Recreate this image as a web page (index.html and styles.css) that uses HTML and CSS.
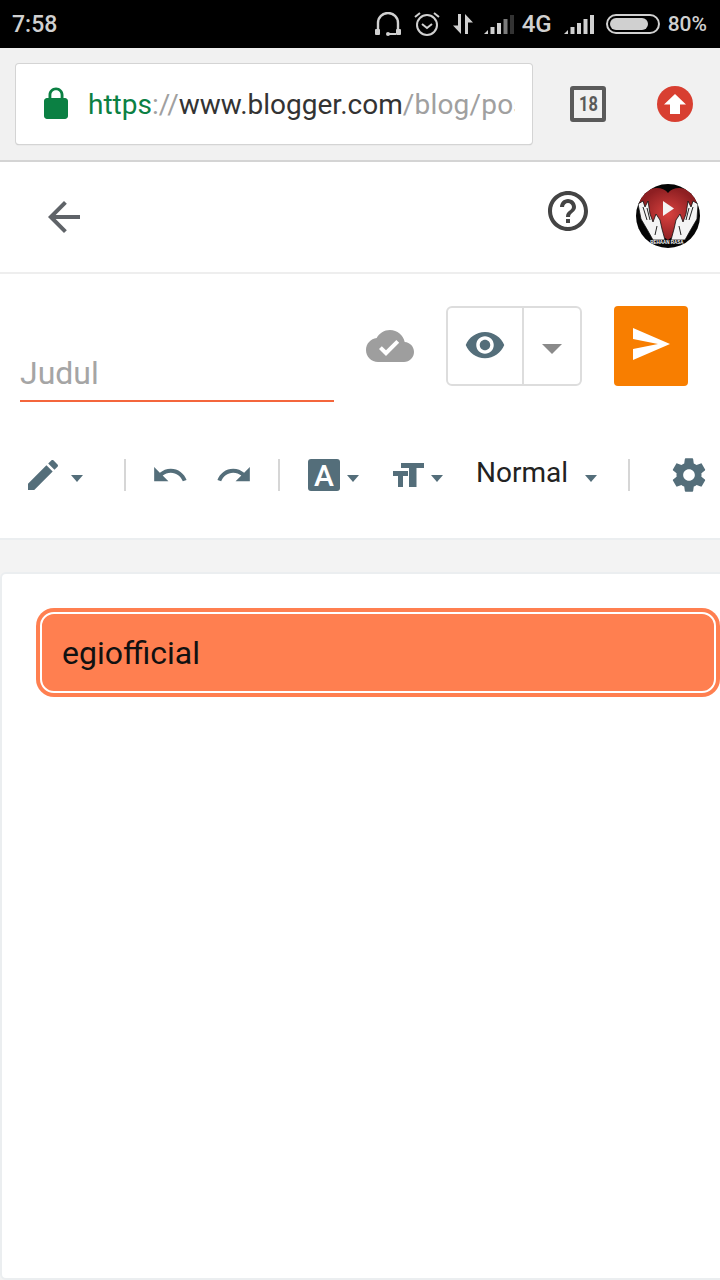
FILE: index.html
```html
<!DOCTYPE html>
<html lang="en">
<head>
  <meta charset="UTF-8">
  <meta name="viewport" content="width=device-width, initial-scale=1.0">
  <title>Blogger</title>
  <link rel="stylesheet" href="styles.css">
</head>
<body>
  <div class="statusbar">
    <span class="clock">7:58</span>
    <div class="status-icons">
      <svg class="st-headset" width="26" height="24" viewBox="0 0 26 24"><path d="M3 20V11a10 10 0 0 1 20 0v9" fill="none" stroke="#d0d0d0" stroke-width="2.400"/><rect x="0" y="17" width="5" height="6" rx="1" fill="#d0d0d0"/><rect x="21" y="17" width="5" height="6" rx="1" fill="#d0d0d0"/><path d="M12 22h9" stroke="#d0d0d0" stroke-width="2"/><circle cx="13" cy="22" r="2" fill="#d0d0d0"/></svg>
      <svg class="st-alarm" width="26" height="26" viewBox="0 0 26 26"><circle cx="13" cy="14" r="10" fill="none" stroke="#d0d0d0" stroke-width="2"/><path d="M8 13l5 4 5-4M1 6l5-4M25 6l-5-4" fill="none" stroke="#d0d0d0" stroke-width="2"/></svg>
      <svg class="st-arrows" width="22" height="22" viewBox="0 0 22 22"><path d="M9 1v20L1 12.500h5V1z" fill="#d0d0d0"/><path d="M13 21V1l8 8.500h-5V21z" fill="#d0d0d0"/></svg>
      <svg class="st-signal" width="30" height="20" viewBox="0 0 30 20"><path d="M0 20l4-4v4zM6.500 20v-7h4v7zM13 20V9h4v11z" fill="#d0d0d0"/><path d="M19.500 20V5h4v15z" fill="#7a7a7a"/><path d="M26 20V1h4v19z" fill="#333"/></svg>
      <span class="net">4G</span>
      <svg class="st-signal2" width="30" height="20" viewBox="0 0 30 20"><path d="M0 20l4-4v4zM6.500 20v-7h4v7zM13 20V9h4v11zM19.500 20V5h4v15zM26 20V1h4v19z" fill="#d0d0d0"/></svg>
      <div class="battery"><div class="battery-fill"></div></div>
      <span class="pct">80%</span>
    </div>
  </div>

  <div class="chrome">
    <div class="urlbox">
      <svg class="lock" width="36" height="36" viewBox="0 0 24 24"><path fill="#0b8043" d="M18 8h-1V6c0-2.760-2.240-5-5-5S7 3.240 7 6v2H6c-1.100 0-2 .9-2 2v10c0 1.100.9 2 2 2h12c1.100 0 2-.9 2-2V10c0-1.100-.9-2-2-2zM8.900 6c0-1.710 1.390-3.100 3.100-3.100s3.100 1.390 3.100 3.100v2H8.900V6z"/></svg>
      <div class="url"><span class="u-green">https</span><span class="u-grey">://</span><span class="u-dark">www.blogger.com</span><span class="u-grey u-path">/blog/pos</span></div>
    </div>
    <div class="tabcount"><span class="tabnum">18</span></div>
    <div class="upload">
      <svg width="22" height="20" viewBox="0 0 22 20"><path d="M11 0l11 10.500h-6V20H6v-9.500H0z" fill="#fff"/></svg>
    </div>
  </div>

  <header class="topbar">
    <svg class="back" width="48" height="48" viewBox="0 0 24 24"><path fill="#5f6368" d="M20 11H7.830l5.590-5.590L12 4l-8 8 8 8 1.410-1.410L7.830 13H20v-2z"/></svg>
    <svg class="help" width="48" height="48" viewBox="0 0 24 24"><path fill="#444" d="M11 18h2v-2h-2v2zm1-16C6.480 2 2 6.480 2 12s4.480 10 10 10 10-4.480 10-10S17.520 2 12 2zm0 18c-4.410 0-8-3.590-8-8s3.590-8 8-8 8 3.590 8 8-3.590 8-8 8zm0-14c-2.210 0-4 1.790-4 4h2c0-1.100.9-2 2-2s2 .9 2 2c0 2-3 1.750-3 5h2c0-2.250 3-2.500 3-5 0-2.210-1.790-4-4-4z"/></svg>
    <svg class="avatar" width="64" height="64" viewBox="0 0 64 64">
      <defs>
        <radialGradient id="heart"><stop offset="0" stop-color="#d9423f"/><stop offset="1" stop-color="#8e1f22"/></radialGradient>
        <clipPath id="round"><circle cx="32" cy="32" r="32"/></clipPath>
      </defs>
      <circle cx="32" cy="32" r="32" fill="#050505"/>
      <g clip-path="url(#round)">
        <path d="M32 9C26 1 9 2 4 16c-3 10 8 25 28 40 20-15 31-30 28-40C55 2 38 1 32 9z" fill="url(#heart)"/>
        <path d="M2 20l5-3 2 6 3-6 2 13 3 8 3-8 4 6 2 9 3 11H17l-5-9-7-12z" fill="#f4f4f4" stroke="#111" stroke-width=".8"/>
        <path d="M62 20l-5-3-2 6-3-6-2 13-3 8-3-8-4 6-2 9-3 11h14l5-9 7-12z" fill="#f4f4f4" stroke="#111" stroke-width=".8"/>
        <path d="M7 23l4 13M11 24l3 12M57 23l-4 13M53 24l-3 12M21 42l-2 9M43 42l2 9" stroke="#222" stroke-width="1" fill="none"/>
        <path d="M27 17l11 7.500L27 32z" fill="#f4f4f4"/>
        <text class="avatar-text" x="31" y="60" text-anchor="middle">REHAAN RASA</text>
      </g>
    </svg>
  </header>

  <section class="titlerow">
    <div class="title-field"><span class="title-hint">Judul</span></div>
    <svg class="cloud" width="48" height="48" viewBox="0 0 24 24"><path fill="#9e9e9e" d="M19.350 10.040C18.670 6.590 15.640 4 12 4 9.110 4 6.600 5.640 5.350 8.040 2.340 8.360 0 10.910 0 14c0 3.310 2.690 6 6 6h13c2.760 0 5-2.240 5-5 0-2.640-2.050-4.780-4.650-4.960zM10 17l-3.500-3.500 1.410-1.410L10 14.170 15.180 9l1.410 1.410L10 17z"/></svg>
    <div class="preview">
      <div class="preview-eye">
        <svg width="42" height="42" viewBox="0 0 24 24"><path fill="#546e7a" d="M12 4.500C7 4.500 2.730 7.610 1 12c1.730 4.390 6 7.500 11 7.500s9.270-3.110 11-7.500c-1.730-4.390-6-7.500-11-7.500zM12 17c-2.760 0-5-2.240-5-5s2.240-5 5-5 5 2.240 5 5-2.240 5-5 5zm0-8c-1.660 0-3 1.340-3 3s1.340 3 3 3 3-1.340 3-3-1.340-3-3-3z"/></svg>
      </div>
      <div class="preview-more"><span class="caret caret-big"></span></div>
    </div>
    <div class="publish">
      <svg width="37" height="32" viewBox="0 0 37 32"><path fill="#fff" d="M0 0l37 16L0 32V21l25-5L0 11z"/></svg>
    </div>
  </section>

  <section class="toolbar">
    <svg class="t-pencil" width="40" height="40" viewBox="0 0 24 24"><path d="M3 17.250V21h3.750L17.810 9.940l-3.750-3.750L3 17.250zM20.710 7.040c.39-.39.39-1.020 0-1.410l-2.340-2.340c-.39-.39-1.020-.39-1.410 0l-1.830 1.830 3.750 3.750 1.830-1.830z"/></svg>
    <span class="caret c-pencil"></span>
    <span class="divider d-first"></span>
    <svg class="t-undo" width="38" height="38" viewBox="0 0 24 24"><path d="M12.500 8c-2.650 0-5.050.99-6.900 2.600L2 7v9h9l-3.620-3.620c1.390-1.160 3.160-1.880 5.120-1.880 3.540 0 6.550 2.310 7.600 5.500l2.370-.78C21.080 11.030 17.150 8 12.500 8z"/></svg>
    <svg class="t-redo" width="38" height="38" viewBox="0 0 24 24"><path d="M18.400 10.600C16.550 8.990 14.150 8 11.500 8c-4.650 0-8.580 3.030-9.960 7.220L3.900 16c1.050-3.190 4.050-5.500 7.600-5.500 1.950 0 3.730.72 5.120 1.880L13 16h9V7l-3.600 3.600z"/></svg>
    <span class="divider d-second"></span>
    <span class="font-a">A</span>
    <span class="caret c-a"></span>
    <svg class="t-size" width="31" height="24" viewBox="0 0 31 24"><path d="M8 0h23v5h-7.500v19H16V5H8zM0 8h15v5h-5v11H5V13H0z"/></svg>
    <span class="caret c-size"></span>
    <span class="format">Normal</span>
    <span class="caret c-format"></span>
    <span class="divider d-third"></span>
    <svg class="t-gear" width="40" height="40" viewBox="0 0 24 24"><path d="M19.430 12.980c.04-.32.07-.64.07-.98s-.03-.66-.07-.98l2.110-1.650c.19-.15.24-.42.12-.64l-2-3.460c-.12-.22-.39-.3-.61-.22l-2.490 1c-.52-.4-1.080-.73-1.690-.98l-.38-2.650C14.460 2.180 14.250 2 14 2h-4c-.25 0-.46.18-.49.42l-.38 2.650c-.61.25-1.170.59-1.690.98l-2.490-1c-.23-.09-.49 0-.61.22l-2 3.460c-.13.22-.07.49.12.64l2.110 1.650c-.04.32-.07.65-.07.98s.03.66.07.98l-2.110 1.650c-.19.15-.24.42-.12.64l2 3.460c.12.22.39.3.61.22l2.490-1c.52.4 1.080.73 1.690.98l.38 2.650c.03.24.24.42.49.42h4c.25 0 .46-.18.49-.42l.38-2.650c.61-.25 1.170-.59 1.690-.98l2.490 1c.23.09.49 0 .61-.22l2-3.460c.12-.22.07-.49-.12-.64l-2.110-1.650zM12 15.500c-1.930 0-3.500-1.570-3.500-3.500s1.570-3.500 3.500-3.500 3.500 1.570 3.500 3.500-1.570 3.500-3.500 3.500z"/></svg>
  </section>

  <main class="editor">
    <div class="chip">egiofficial</div>
  </main>
</body>
</html>
```

FILE: styles.css
```css
* {
  box-sizing: border-box;
}

html, body {
  margin: 0;
  height: 1280px;
  overflow: hidden;
}

body {
  font-family: Roboto, sans-serif;
  background: #f3f3f3;
  color: #222;
  display: flex;
  flex-direction: column;
}

svg {
  display: block;
  flex: none;
}

/* status bar */
.statusbar {
  height: 48px;
  background: #000;
  color: #d0d0d0;
  display: flex;
  align-items: center;
  justify-content: space-between;
  padding: 0 13px 0 12px;
  font-weight: 500;
}

.clock {
  font-size: 23px;
}

.status-icons {
  display: flex;
  align-items: center;
}

.st-headset { margin-right: 13px; }
.st-alarm { margin-right: 12px; }
.st-arrows { margin-right: 10px; }
.st-signal { margin-right: 8px; }
.st-signal2 { margin-left: 13px; margin-right: 12px; }

.net {
  width: 29px;
  font-size: 24px;
}

.battery {
  width: 54px;
  height: 20px;
  border: 2px solid #d0d0d0;
  border-radius: 10px;
  padding: 2px;
  margin-right: 8px;
}

.battery-fill {
  width: 84%;
  height: 100%;
  background: #d0d0d0;
  border-radius: 6px;
}

.pct {
  font-size: 21px;
}

/* browser bar */
.chrome {
  height: 114px;
  background: #f1f1f1;
  border-bottom: 2px solid #d4d4d4;
  display: flex;
  align-items: center;
  padding-left: 16px;
}

.urlbox {
  width: 516px;
  height: 80px;
  background: #fff;
  border-radius: 3px;
  box-shadow: 0 0 0 1px #d4d4d4, 0 1px 1px #a8a8a8;
  display: flex;
  align-items: center;
  padding: 0 17px 0 22px;
}

.url {
  margin-left: 14px;
  font-size: 28px;
  white-space: nowrap;
  overflow: hidden;
}

.u-green { color: #0b8043; }
.u-grey { color: #a0a0a0; }
.u-dark { color: #333; }
.u-path { letter-spacing: .2px; }

.tabcount {
  width: 36px;
  height: 36px;
  margin-left: 38px;
  border: 4px solid #5a5a5a;
  border-radius: 3px;
  color: #5a5a5a;
  font-size: 20px;
  font-weight: 700;
  display: flex;
  align-items: center;
  justify-content: center;
}

.tabnum {
  transform: scaleX(.82);
}

.upload {
  width: 36px;
  height: 36px;
  margin-left: 51px;
  border-radius: 50%;
  background: #d83f31;
  display: flex;
  align-items: center;
  justify-content: center;
}

/* blogger header */
.topbar {
  height: 112px;
  background: #fff;
  border-bottom: 2px solid #eee;
  display: flex;
  align-items: center;
  padding: 0 20px 0 40px;
}

.help {
  margin-left: auto;
  margin-bottom: 12px;
}

.avatar {
  margin-left: 44px;
  margin-top: -2px;
}

.avatar-text {
  font-family: "Liberation Sans", sans-serif;
  font-size: 4.500px;
  font-weight: 700;
  fill: #fff;
}

/* title row */
.titlerow {
  background: #fff;
  display: flex;
  align-items: flex-start;
  padding: 32px 0 0 20px;
  height: 152px;
}

.title-field {
  width: 314px;
  height: 96px;
  border-bottom: 2px solid #f4663c;
  display: flex;
  align-items: flex-end;
  padding-bottom: 8px;
}

.title-hint {
  font-size: 32px;
  line-height: 38px;
  color: #a5a5a5;
}

.cloud {
  margin: 16px 0 0 32px;
}

.preview {
  width: 136px;
  height: 80px;
  margin-left: 32px;
  border: 2px solid #ddd;
  border-radius: 6px;
  display: flex;
}

.preview-eye {
  width: 76px;
  border-right: 2px solid #ddd;
  display: flex;
  align-items: center;
  justify-content: center;
  padding-bottom: 2px;
}

.preview-more {
  flex: 1;
  display: flex;
  align-items: center;
  justify-content: center;
  padding-top: 6px;
}

.publish {
  width: 74px;
  height: 80px;
  margin-left: 32px;
  background: #f87e00;
  border-radius: 4px;
  display: flex;
  align-items: center;
  justify-content: center;
  padding-bottom: 4px;
}

/* format toolbar */
.toolbar {
  background: #fff;
  height: 114px;
  border-bottom: 2px solid #ebeef0;
  display: flex;
  align-items: center;
  padding: 0 0 14px 23px;
}

.toolbar svg {
  fill: #546e7a;
}

.caret {
  width: 0;
  height: 0;
  flex: none;
  border-left: 6.500px solid transparent;
  border-right: 6.500px solid transparent;
  border-top: 7px solid #546e7a;
}

.caret-big {
  border-left-width: 10px;
  border-right-width: 10px;
  border-top: 10px solid #8a8a8a;
}

.divider {
  width: 2px;
  height: 32px;
  flex: none;
  background: #d6d6d6;
}

.c-pencil { margin: 7px 0 0 8px; }
.d-first { margin-left: 41px; }
.t-undo { margin-left: 25px; }
.t-redo { margin-left: 26px; }
.d-second { margin-left: 25px; }

.font-a {
  width: 32px;
  height: 32px;
  margin-left: 28px;
  border-radius: 3px;
  background: #546e7a;
  color: #fff;
  font-size: 30px;
  font-weight: 500;
  line-height: 33px;
  text-align: center;
}

.c-a { margin: 7px 0 0 7px; }
.t-size { margin-left: 34px; }
.c-size { margin: 7px 0 0 7px; }

.format {
  margin-left: 33px;
  font-size: 28px;
  line-height: 32px;
  color: #222;
  margin-top: -5px;
}

.c-format { margin: 7px 0 0 17px; }
.d-third { margin-left: 31px; }
.t-gear { margin-left: 39px; }

/* editor */
.editor {
  flex: 1;
  margin: 32px -20px 0 0;
  background: #fff;
  border: 2px solid #ebeef0;
  border-radius: 6px 0 0 6px;
  padding: 38px 0 0 38px;
}

.chip {
  width: 676px;
  height: 81px;
  background: #ff7f50;
  border: 2px solid #fff;
  border-radius: 14px;
  box-shadow: 0 0 0 4px #ff7f50;
  color: #111;
  font-size: 32px;
  line-height: 79px;
  padding-left: 20px;
}
```
